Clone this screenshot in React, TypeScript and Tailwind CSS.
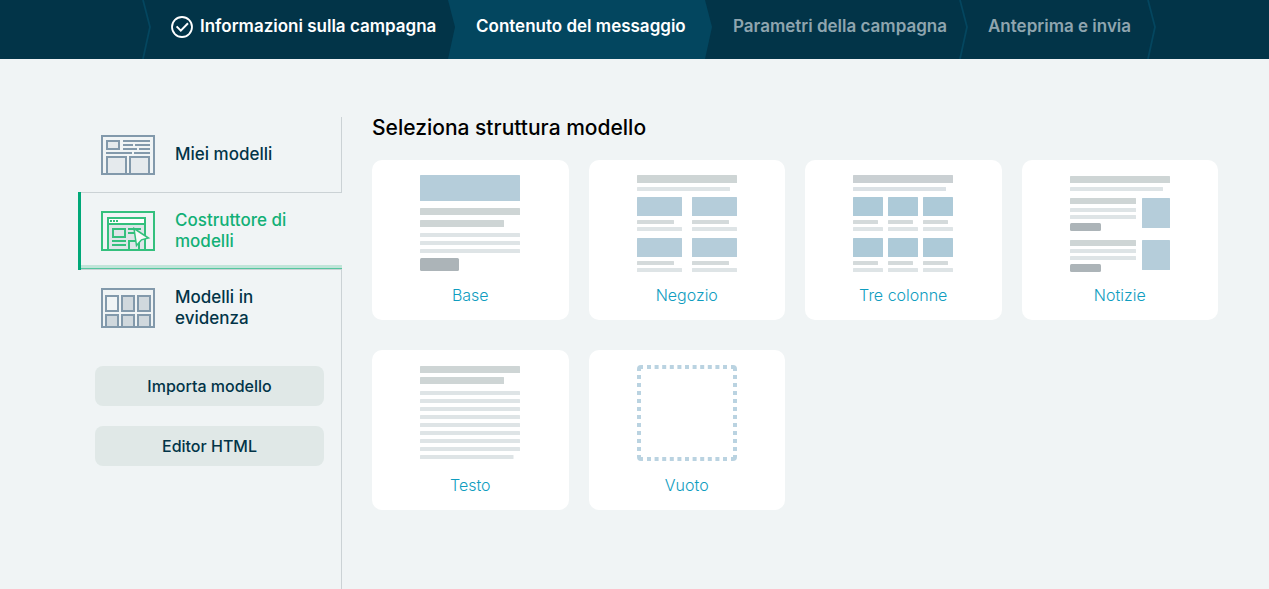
import type { ReactNode } from 'react';

type StepState = 'done' | 'active' | 'todo';

const steps: { label: string; state: StepState; width: string }[] = [
  { label: 'Informazioni sulla campagna', state: 'done', width: 'w-[305px]' },
  { label: 'Contenuto del messaggio', state: 'active', width: 'w-[257px]' },
  { label: 'Parametri della campagna', state: 'todo', width: 'w-[255px]' },
  { label: 'Anteprima e invia', state: 'todo', width: 'w-[188px]' },
];

const DARK = '#023448';
const ACTIVE = '#03465f';

function Chevron({ left, right }: { left: string; right: string }) {
  return (
    <svg width="10" height="59" viewBox="0 0 10 59" className="shrink-0" aria-hidden="true">
      <rect width="10" height="59" fill={right} />
      <path d="M0 0H1L8 27L1 59H0Z" fill={left} />
      {left === right && <path d="M1 0L8 27L1 59" fill="none" stroke="#04465f" strokeWidth="1.8" />}
    </svg>
  );
}

function CheckCircle() {
  return (
    <svg width="22" height="22" viewBox="0 0 22 22" fill="none" stroke="#fff" className="mr-[7px] shrink-0" aria-hidden="true">
      <circle cx="11" cy="11" r="10" strokeWidth="1.8" />
      <path d="M5.6 10.4L9.8 14.6L17 7.2" strokeWidth="2" />
    </svg>
  );
}

function MyTemplatesIcon() {
  return (
    <svg width="54" height="40" viewBox="0 0 54 40" className="shrink-0" aria-hidden="true">
      <g fill="#e5eaed" stroke="#8299ab" strokeWidth="2">
        <rect x="1" y="1" width="52" height="38" fill="none" />
        <rect x="6" y="6" width="12" height="8" />
        <rect x="6" y="22" width="19" height="17" />
        <rect x="29" y="22" width="19" height="17" />
        <path d="M22 6H49M22 10H32M34 10H49M22 14H36M38 14H49M5 18H31M33 18H49" />
      </g>
    </svg>
  );
}

function BuilderIcon() {
  return (
    <svg width="54" height="40" viewBox="0 0 54 40" className="shrink-0" aria-hidden="true">
      <g fill="none" stroke="#34c07d" strokeWidth="2">
        <rect x="1" y="1" width="52" height="38" />
        <rect x="7" y="7" width="37" height="32" fill="#dee5e8" />
        <rect x="7" y="7" width="37" height="6" fill="#fff" />
        <rect x="12" y="18" width="12" height="8" />
        <path d="M27 18H40M27 22H34M11 30H25M11 34H25M28 39V30H38V39" />
      </g>
      <path d="M9 9h2v2H9zM12 9h2v2h-2zM15 9h2v2h-2z" fill="#34c07d" />
      <path d="M33 17.5L47.5 27L40.5 28.8L35.5 34.5Z" fill="#f8fafa" stroke="#34c07d" strokeWidth="1.5" />
    </svg>
  );
}

function FeaturedIcon() {
  return (
    <svg width="54" height="40" viewBox="0 0 54 40" className="shrink-0" aria-hidden="true">
      <g fill="#d0d8dd" stroke="#8299ab" strokeWidth="2">
        <rect x="1" y="1" width="52" height="38" fill="none" />
        <rect x="5" y="8" width="12" height="15" fill="#f0f4f5" />
        <rect x="21" y="8" width="12" height="15" />
        <rect x="37" y="8" width="12" height="15" />
        <rect x="5" y="27" width="12" height="12" />
        <rect x="21" y="27" width="12" height="12" />
        <rect x="37" y="27" width="12" height="12" />
      </g>
    </svg>
  );
}

/* Wireframe block: x, y, width, height, colour, corner radius */
type Block = [number, number, number, number, string, number?];

const BLUE = '#b5cdda';
const BAR = '#ced5d5';
const CAPTION = '#d4dadb';
const LINE = '#dee4e6';
const BUTTON = '#acb4b8';

const base: Block[] = [
  [0, 0, 100, 26, BLUE],
  [0, 33, 100, 7, BAR],
  [0, 45, 84, 7, BAR],
  [0, 58, 100, 4, LINE],
  [0, 66, 100, 4, LINE],
  [0, 74, 100, 4, LINE],
  [0, 83, 39, 13, BUTTON, 1.5],
];

function columns(xs: number[], width: number, caption: number, blue: string): Block[] {
  return [22, 63].flatMap((y) =>
    xs.flatMap((x): Block[] => [
      [x, y, width, 19, blue],
      [x, y + 23, caption, 4, CAPTION],
      [x, y + 30, width, 4, LINE],
    ]),
  );
}

const shop: Block[] = [
  [0, 0, 100, 8, BAR],
  [0, 12, 93, 4, LINE],
  ...columns([0, 55], 45, 37, BLUE),
];

const threeColumns: Block[] = [
  [0, 0, 100, 8, '#cad0d3'],
  [0, 12, 93, 4, '#dbe1e5'],
  ...columns([0, 35, 70], 30, 25, '#adcad8'),
];

const news: Block[] = [
  [0, 1, 100, 7, BAR],
  [0, 12, 93, 4, LINE],
  [0, 23, 66, 6, BAR],
  [0, 33, 66, 4, LINE],
  [0, 40, 66, 4, LINE],
  [0, 48, 31, 8, BUTTON, 1.5],
  [72, 23, 28, 30, BLUE],
  [0, 65, 66, 6, BAR],
  [0, 74, 66, 4, LINE],
  [0, 81, 66, 4, LINE],
  [0, 89, 31, 8, BUTTON, 1.5],
  [72, 65, 28, 30, BLUE],
];

const text: Block[] = [
  [0, 1, 100, 7, BAR],
  [0, 12, 84, 7, BAR],
  ...Array.from({ length: 9 }, (_, i): Block => [0, 26 + i * 8, i === 8 ? 93.5 : 100, 4, LINE]),
];

function Wireframe({ blocks }: { blocks: Block[] }) {
  return (
    <svg width="100" height="98" viewBox="0 0 100 98" aria-hidden="true">
      {blocks.map(([x, y, w, h, fill, r = 0.5], i) => (
        <rect key={i} x={x} y={y} width={w} height={h} fill={fill} rx={r} />
      ))}
    </svg>
  );
}

function EmptyFrame() {
  return (
    <svg width="100" height="98" viewBox="0 0 100 98" aria-hidden="true">
      <g fill="none" stroke="#bad3e1" strokeWidth="4">
        <path d="M2 6V4Q2 2 4 2H6M94 2H96Q98 2 98 4V6M98 90V92Q98 94 96 94H94M6 94H4Q2 94 2 92V90" />
        <path d="M10 2H90.2M10 94H90.2" strokeDasharray="4 3.6" />
        <path d="M2 10V86.2M98 10V86.2" strokeDasharray="4 4" />
      </g>
    </svg>
  );
}

const layouts: { name: string; art: ReactNode }[] = [
  { name: 'Base', art: <Wireframe blocks={base} /> },
  { name: 'Negozio', art: <Wireframe blocks={shop} /> },
  { name: 'Tre colonne', art: <Wireframe blocks={threeColumns} /> },
  { name: 'Notizie', art: <Wireframe blocks={news} /> },
  { name: 'Testo', art: <Wireframe blocks={text} /> },
  { name: 'Vuoto', art: <EmptyFrame /> },
];

export default function App() {
  return (
    <div className="flex min-h-screen flex-col bg-[#f0f4f5] font-['Inter','Liberation_Sans',sans-serif] text-[#023448]">
      <nav className="bg-[#023448]">
        <ol className="flex h-[59px] pl-[142px]">
          <li className="flex" aria-hidden="true">
            <Chevron left={DARK} right={DARK} />
          </li>
          {steps.map((step, i) => {
            const own = step.state === 'active' ? ACTIVE : DARK;
            const next = steps[i + 1]?.state === 'active' ? ACTIVE : DARK;
            return (
              <li key={step.label} className={`flex shrink-0 justify-between ${step.width}`}>
                <a
                  href="#"
                  aria-current={step.state === 'active' ? 'step' : undefined}
                  className={`flex grow items-center pb-[6px] pl-[19px] text-[17px] font-semibold whitespace-nowrap ${
                    step.state === 'active' ? 'bg-[#03465f]' : ''
                  } ${step.state === 'todo' ? 'text-[#8fa5af]' : 'text-white'}`}
                >
                  {step.state === 'done' && <CheckCircle />}
                  {step.label}
                </a>
                <Chevron left={own} right={next} />
              </li>
            );
          })}
        </ol>
      </nav>

      <div className="flex grow gap-[30px] pt-[58px] pr-[51px] pl-[78px]">
        <aside className="flex w-[264px] shrink-0 flex-col text-[17px] leading-[21px] font-medium">
          <a href="#" className="flex h-[75px] items-center gap-5 border-r border-[#cbd2d5] pl-[23px]">
            <MyTemplatesIcon />
            <span className="w-[125px]">Miei modelli</span>
          </a>
          <a href="#" aria-current="page" className="flex h-[78px] flex-col border-l-[3px] border-[#00a878] text-[#12b076]">
            <span className="flex grow items-center gap-5 border-t border-[#cbd2d5] pt-[3px] pl-5">
              <BuilderIcon />
              <span className="w-[125px]">Costruttore di modelli</span>
            </span>
            <span className="h-[5px] border-b border-[#cbd2d5] bg-[#c1e5d9]">
              <span className="block h-full border-b border-[#56c79f]" />
            </span>
          </a>
          <div className="grow border-r border-[#cbd2d5]">
            <a href="#" className="flex h-[76px] items-center gap-5 pl-[23px]">
              <FeaturedIcon />
              <span className="w-[125px]">Modelli in evidenza</span>
            </a>
            <div className="mt-5 mr-[17px] ml-[17px] flex flex-col gap-5 text-base">
              <button type="button" className="h-10 rounded-lg bg-[#e0e8e7]">
                Importa modello
              </button>
              <button type="button" className="h-10 rounded-lg bg-[#e0e8e7]">
                Editor HTML
              </button>
            </div>
          </div>
        </aside>

        <main className="min-w-0 grow">
          <h1 className="text-[21px] leading-[22px] font-medium text-black">Seleziona struttura modello</h1>
          <ul className="mt-[21px] grid grid-cols-4 gap-x-5 gap-y-[30px]">
            {layouts.map((layout) => (
              <li key={layout.name}>
                <a
                  href="#"
                  className="flex h-40 flex-col items-center rounded-[10px] bg-white pt-[15px] text-base leading-6 font-light text-[#109dbf]"
                >
                  {layout.art}
                  <span className="mt-[10px]">{layout.name}</span>
                </a>
              </li>
            ))}
          </ul>
        </main>
      </div>
    </div>
  );
}
